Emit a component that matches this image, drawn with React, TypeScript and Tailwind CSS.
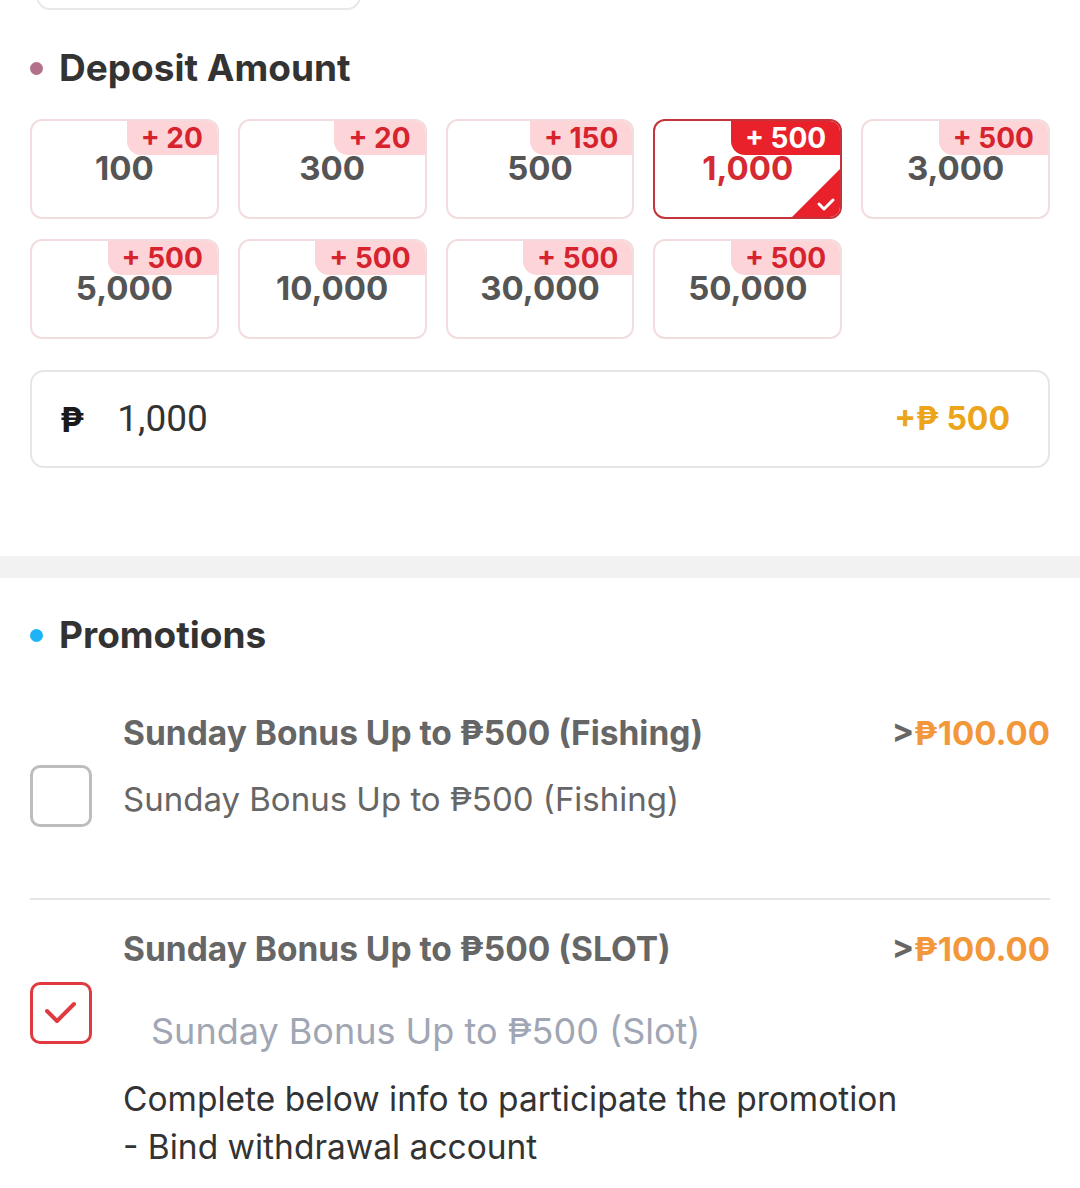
const tiles = [
  { amount: '100', bonus: '+ 20' },
  { amount: '300', bonus: '+ 20' },
  { amount: '500', bonus: '+ 150' },
  { amount: '1,000', bonus: '+ 500', selected: true },
  { amount: '3,000', bonus: '+ 500' },
  { amount: '5,000', bonus: '+ 500' },
  { amount: '10,000', bonus: '+ 500' },
  { amount: '30,000', bonus: '+ 500' },
  { amount: '50,000', bonus: '+ 500' },
]

function AmountTile({ amount, bonus, selected }: { amount: string; bonus: string; selected?: boolean }) {
  return (
    <div
      className={
        'relative h-[100px] overflow-hidden rounded-[12px] bg-white ' +
        (selected ? 'border-2 border-[#c3353b]' : 'border-2 border-[#f3dcde]')
      }
    >
      <div
        className={
          'absolute right-0 top-0 h-[34px] rounded-bl-[14px] px-[14px] text-[28px] font-bold leading-[34px] ' +
          (selected ? 'bg-[#e8212b] text-white' : 'bg-[#fdd5d8] text-[#d7232e]')
        }
      >
        {bonus}
      </div>
      <div
        className={
          'pt-[33px] text-center text-[33px] font-bold leading-[28px] ' +
          (selected ? 'text-[#d52a33]' : 'text-[#555555]')
        }
      >
        {amount}
      </div>
      {selected && (
        <svg className="absolute bottom-0 right-0" width="48" height="48" viewBox="0 0 48 48">
          <polygon points="48,0 48,48 0,48" fill="#e8212b" />
          <path d="M27 35 L32 40 L41 31" fill="none" stroke="white" strokeWidth="3" strokeLinecap="round" strokeLinejoin="round" />
        </svg>
      )}
    </div>
  )
}

function Checkbox({ checked }: { checked?: boolean }) {
  return (
    <div
      className={
        'relative h-[62px] w-[62px] shrink-0 rounded-[10px] border-[3px] ' +
        (checked ? 'border-[#e03a40]' : 'border-[#bdbdbd]')
      }
    >
      {checked && (
        <svg className="absolute left-0 top-0" width="56" height="56" viewBox="0 0 56 56">
          <path d="M14 26 L24 36 L41 19" fill="none" stroke="#e03a40" strokeWidth="4" strokeLinecap="round" strokeLinejoin="round" />
        </svg>
      )}
    </div>
  )
}

export default function App() {
  return (
    <div className="min-h-[1188px] overflow-hidden bg-white font-['Inter','Noto_Sans','DejaVu_Sans',sans-serif]">
      <div className="px-[30px]">
        <div className="-mt-[30px] ml-[6px] h-[40px] w-[325px] rounded-[14px] border-2 border-[#e8e8e8]" />

        <div className="mt-[36px] flex items-center gap-[16px]">
          <span className="h-[13px] w-[13px] rounded-full bg-[#b3708b]" />
          <h2 className="text-[37px] font-bold leading-[44px] text-[#333333]">Deposit Amount</h2>
        </div>

        <div className="mt-[29px] grid grid-cols-5 gap-x-[19px] gap-y-[20px]">
          {tiles.map((t) => (
            <AmountTile key={t.amount} {...t} />
          ))}
        </div>

        <div className="mt-[31px] flex h-[98px] items-center rounded-[14px] border-2 border-[#e6e6e6] px-[28px]">
          <span className="text-[34px] font-bold text-[#1a1a1a]">₱</span>
          <span className="ml-[33px] font-['Roboto',sans-serif] text-[37px] text-[#333333]">1,000</span>
          <span className="ml-auto mr-[10px] text-[32px] font-bold text-[#eca41a]">+₱ 500</span>
        </div>
      </div>

      <div className="mt-[88px] h-[22px] bg-[#f2f2f2]" />

      <div className="px-[30px]">
        <div className="mt-[35px] flex items-center gap-[16px]">
          <span className="h-[13px] w-[13px] rounded-full bg-[#1db3f6]" />
          <h2 className="text-[37px] font-bold leading-[44px] text-[#333333]">Promotions</h2>
        </div>

        <div className="mt-[54px] flex items-start gap-[31px] pb-[71px]">
          <div className="mt-[54px]">
            <Checkbox />
          </div>
          <div className="flex-1">
            <div className="flex items-center justify-between">
              <div className="text-[33.5px] font-bold leading-[44px] text-[#666666]">Sunday Bonus Up to ₱500 (Fishing)</div>
              <div className="text-[33px] font-bold leading-[44px]">
                <span className="text-[#666666]">&gt;</span>
                <span className="text-[#f2973a]">₱100.00</span>
              </div>
            </div>
            <div className="mt-[22px] text-[33px] leading-[44px] text-[#666666]">Sunday Bonus Up to ₱500 (Fishing)</div>
          </div>
        </div>

        <div className="h-[2px] bg-[#e6e6e6]" />

        <div className="mt-[27px] flex items-start gap-[31px]">
          <div className="mt-[55px]">
            <Checkbox checked />
          </div>
          <div className="flex-1">
            <div className="flex items-center justify-between">
              <div className="text-[33.5px] font-bold leading-[44px] text-[#666666]">Sunday Bonus Up to ₱500 (SLOT)</div>
              <div className="text-[33px] font-bold leading-[44px]">
                <span className="text-[#666666]">&gt;</span>
                <span className="text-[#f2973a]">₱100.00</span>
              </div>
            </div>
            <div className="ml-[28px] mt-[38px] text-[36px] leading-[44px] text-[#a0a6b4]">Sunday Bonus Up to ₱500 (Slot)</div>
            <div className="mt-[22px] text-[33.5px] leading-[48px] text-[#333333]">
              <div>Complete below info to participate the promotion</div>
              <div>- Bind withdrawal account</div>
            </div>
          </div>
        </div>
      </div>
    </div>
  )
}
